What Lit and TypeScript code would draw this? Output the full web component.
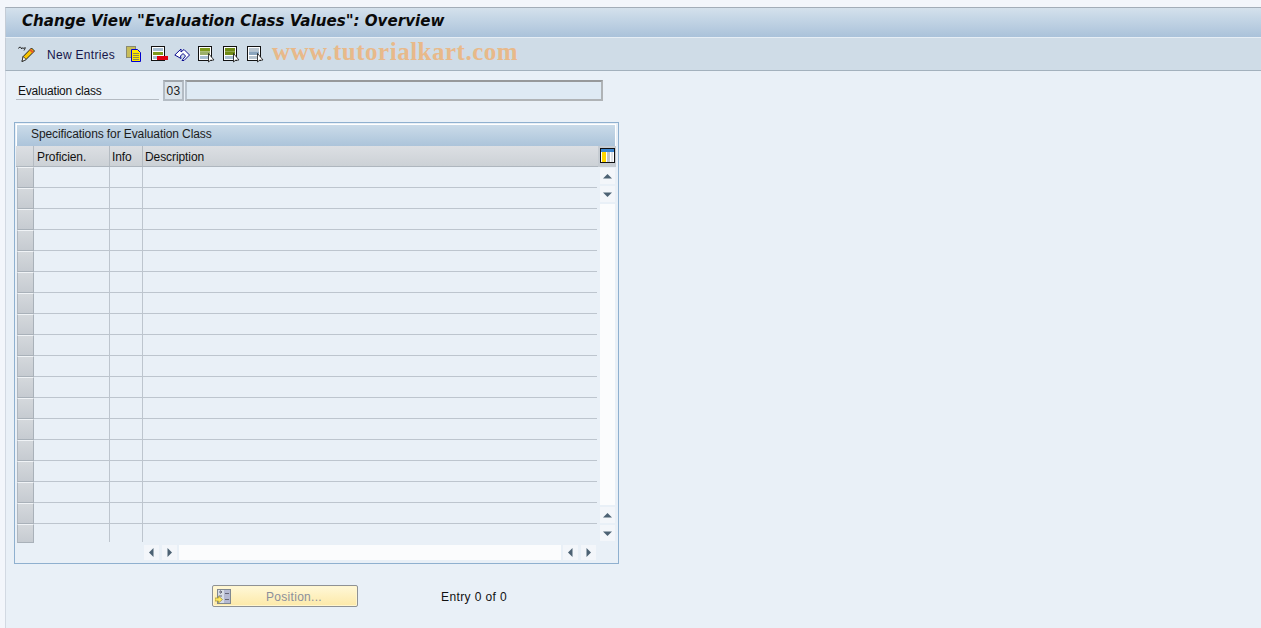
import { LitElement, html, css, svg } from "lit";
import { customElement } from "lit/decorators.js";

const ic = (w: number, h: number, body: unknown) =>
  html`<svg class="ic" width=${w} height=${h} viewBox="0 0 ${w} ${h}">${body}</svg>`;

const pencil = ic(18, 18, svg`
  <path d="M.5 3.500a1.500 1.500 0 1 1 3 .5M3.500 4a1.500 1.500 0 1 1 2.500 1.500M6 3h2" fill="none" stroke="#222" stroke-width="1"/>
  <path d="M4 16.500l1.200-5L13.500 3l3 3-8.500 8.500z" fill="#f9c400" stroke="#222" stroke-width="1"/>
  <path d="M12 4.500l3 3" stroke="#e4572a" stroke-width="2"/>
  <path d="M4 16.500l1.200-5 3 3z" fill="#fff" stroke="#222" stroke-width=".8"/>`);
const copy = ic(16, 16, svg`
  <rect x=".5" y=".5" width="9" height="11" fill="#c8bd5a" stroke="#8a8a70"/>
  <path d="M5.500 3.500h6l3 3v9h-9z" fill="#ffe600" stroke="#0000d0"/>
  <path d="M7 7.500h6M7 9.500h6M7 11.500h6M7 13.500h6" stroke="#8a8a50"/>`);
const del = ic(17, 16, svg`
  <rect x=".5" y=".5" width="13" height="14" fill="#fff" stroke="#111"/>
  <rect x="2" y="2" width="10" height="3" fill="#a9bfd2"/>
  <rect x="2" y="6" width="10" height="3" fill="#7f9a1c"/>
  <rect x="2" y="10" width="10" height="3" fill="#a9bfd2"/>
  <rect x="6" y="10" width="11" height="4" fill="#e00010"/>`);
const undo = ic(17, 15, svg`
  <path d="M.8 8L7 2v3l3-2.500 5.500 5.500-5.500 5.500H8l3.500-4.500L9 6.500 6.500 9 7 11.500z" fill="#fff" stroke="#0a0a90" stroke-width="1" stroke-linejoin="miter"/>`);
const sel = (a: string, b: string, c: string) => ic(17, 17, svg`
  <rect x=".5" y=".5" width="13" height="14" fill="#fff" stroke="#111"/>
  <rect x="2" y="2" width="10" height="3.500" fill=${a}/>
  <rect x="2" y="5.500" width="10" height="3.500" fill=${b}/>
  <rect x="2" y="10" width="10" height="3" fill=${c}/>
  <path d="M10.500 7.500v8.500l2-1.700 3.500-.3z" fill="#fff" stroke="#111" stroke-width=".8"/>`);
const columns = ic(15, 15, svg`
  <rect x=".5" y=".5" width="14" height="14" fill="#fff" stroke="#111"/>
  <rect x="1" y="1" width="13" height="3" fill="#3a86d0"/>
  <rect x="2" y="4" width="4" height="10" fill="#ffd800"/>
  <rect x="7" y="4" width="3" height="10" fill="#c0c5ca"/>
  <rect x="11" y="4" width="2" height="10" fill="#dfe3e7"/>`);
const posIcon = ic(16, 15, svg`
  <rect x="2.500" y=".5" width="13" height="14" fill="#d8dde6" stroke="#808890"/>
  <rect x="9" y="1" width="6" height="13" fill="#b5b9d2"/>
  <path d="M10 4.500h4M10 10.500h4" stroke="#667"/>
  <path d="M4 3h3M5 1.500L7 3 5 4.500M4 7h3" stroke="#667" fill="none"/>
  <path d="M0 9h3.500V7l4 3.500-4 3.500v-2H0z" fill="#ffe860" stroke="#a09030" stroke-width=".7"/>`);
const arrow = (d: "u" | "d" | "l" | "r") => {
  const p = { u: "M3 9.500L7.500 5 12 9.500z", d: "M3 5.500h9L7.500 10z", l: "M9.500 3v9L5 7.500z", r: "M5.500 3v9L10 7.500z" }[d];
  return html`<svg class="ic" width="15" height="15" viewBox="0 0 15 15"><path d=${p} fill="#4d6273"/></svg>`;
};

@customElement("app-root")
export class AppRoot extends LitElement {
  static styles = css`
    :host { display: block; width: 1261px; height: 628px; overflow: hidden; background: #f3f6fb;
      font-family: "Liberation Sans", Arial, sans-serif; font-size: 12px; color: #111; }
    .ic { display: block; flex: none; }
    .frame { margin-left: 5px; height: 628px; padding-top: 7px; box-sizing: border-box; display: flex; flex-direction: column; }
    .title { height: 31px; box-sizing: border-box; flex: none; border-top: 1px solid #a3adb8; border-left: 1px solid #c4ccd6;
      background: linear-gradient(#d4e1ec, #aac2da); display: flex; align-items: center; padding: 0 0 3px 16px;
      font: italic bold 15.100px "DejaVu Sans", sans-serif; color: #0a0a0a; border-bottom: 1px solid #e6eef5; }
    .toolbar { height: 33px; box-sizing: border-box; flex: none; background: #cfdce7; border-bottom: 1px solid #a3b1bd;
      border-left: 1px solid #c4ccd6; display: flex; align-items: center; padding-left: 12px; }
    .toolbar .new { width: 67px; margin: 0 12px 0 11px; padding-top: 2px; color: #16164a; white-space: nowrap; letter-spacing: .3px; }
    .tools { display: flex; align-items: center; }
    .tools .g6 { margin-left: 6px; }
    .tools .g7 { margin-left: 7px; }
    .tools .g8 { margin-left: 8px; }
    .tools .g9 { margin-left: 9px; }
    .mark { margin: 0 0 5px 8px; font: bold 25px "Liberation Serif", serif; color: #e8b98a; letter-spacing: .5px; white-space: nowrap; }
    .main { flex: 1; background: #e9f0f7; border-left: 1px solid #d2d9e2; padding: 9px 0 0 8px; display: flex; flex-direction: column; }
    .field { display: flex; align-items: stretch; height: 21px; }
    .field .lab { width: 143px; margin-left: 2px; margin-right: 4px; padding-left: 2px; box-sizing: border-box;
      border-bottom: 1px solid #b4bac1; line-height: 22px; height: 20px; letter-spacing: -.2px; }
    .field .key { width: 21px; box-sizing: border-box; background: #dbe4ec; border: 2px solid #b4bcc4; border-top-color: #a0a6ac;
      text-align: center; line-height: 18px; margin-right: 1px; color: #222; letter-spacing: .3px; }
    .field .val { width: 418px; box-sizing: border-box; background: #deeaf4; border: 2px solid #afb3b6; border-top-color: #96999b; border-left-color: #b8c2cc; }
    .box { margin-top: 21px; width: 605px; height: 442px; box-sizing: border-box; border: 1px solid #8fb0cf; padding: 1px 2px 0 1px; display: flex; flex-direction: column; }
    .box-title { height: 22px; flex: none; box-sizing: border-box; background: linear-gradient(#cadbe9, #acc4da); padding-left: 14px; line-height: 18px;
      border-left: 1px solid #fff; border-right: 1px solid #fff; border-top: 1px solid #fff; color: #1c1c1c; letter-spacing: -.1px; }
    .head-wrap { display: flex; flex: none; }
    .head { flex: 1; height: 21px; display: grid; grid-template-columns: 18px 76px 33px 1fr; background: linear-gradient(#dcdfe3, #ccd1d6);
      border-bottom: 1px solid #aeb6be; box-sizing: border-box; }
    .head div { border-right: 1px solid #b4bbc2; padding-left: 2px; line-height: 22px; overflow: hidden; letter-spacing: -.08px; }
    .head div:nth-child(2) { padding-left: 3px; }
    .head div:last-child { border-right: 0; }
    .cfg { width: 18px; height: 21px; box-sizing: border-box; background: #c6ccd2; padding: 2px 0 0 2px; flex: none; }
    .body { display: flex; flex: none; height: 378px; }
    .grid { width: 581px; flex: none; }
    .row { display: grid; grid-template-columns: 18px 76px 33px 1fr; height: 21px; box-sizing: border-box; }
    .row div { border-right: 1px solid #bdc5ce; border-bottom: 1px solid #bdc5ce; box-sizing: border-box; }
    .row div:last-child { border-right: 0; }
    .row .sel { margin-left: 1px; background: linear-gradient(#d4d8dc, #c6cbd1); border: 1px solid #a9b1b9; border-top-color: #f0f3f6; border-left-color: #b0b7bf; }
    .row:last-child { height: 19px; }
    .row:last-child div:not(.sel) { border-bottom: 0; height: 18px; }
    .vbar { width: 15px; margin-left: 3px; padding-top: 1px; display: flex; flex-direction: column; gap: 2px; height: 374px; box-sizing: border-box; }
    .btn { width: 15px; height: 16px; background: #f3f6fa; display: flex; align-items: center; justify-content: center; flex: none; }
    .track { flex: 1; background: #fbfcfd; width: 15px; }
    .hbar { display: flex; height: 15px; margin-left: 128px; width: 452px; }
    .hbar .btn { height: 15px; }
    .hbar .gap3 { margin-left: 3px; }
    .hbar .track { flex: 1; height: 15px; width: auto; margin: 0 2px; }
    .foot { display: flex; align-items: center; margin: 21px 0 0 198px; }
    .pbtn { width: 146px; height: 22px; box-sizing: border-box; border: 1px solid #8f9295; border-radius: 2px; background: linear-gradient(#fff8d8, #fde9a8);
      display: flex; align-items: center; padding-left: 2px; color: #8b8f9b; box-shadow: inset 0 0 0 1px #fff6cf; }
    .pbtn span { flex: 1; text-align: center; letter-spacing: .3px; padding-top: 2px; }
    .entry { margin-left: 83px; padding-top: 2px; color: #111; letter-spacing: .4px; }
  `;

  render() {
    const rows = Array.from({ length: 18 });
    return html`<div class="frame">
      <div class="title">Change View "Evaluation Class Values": Overview</div>
      <div class="toolbar">
        ${pencil}
        <span class="new">New Entries</span>
        <div class="tools">
          ${copy}
          <span class="g9">${del}</span>
          <span class="g6">${undo}</span>
          <span class="g7">${sel("#7f9a1c", "#9bb06a", "#a9bfd2")}</span>
          <span class="g8">${sel("#6f8a14", "#6f8a14", "#a9bfd2")}</span>
          <span class="g7">${sel("#b8c4ce", "#8aa4bc", "#b8c4ce")}</span>
        </div>
        <span class="mark">www.tutorialkart.com</span>
      </div>
      <div class="main">
        <div class="field">
          <div class="lab">Evaluation class</div>
          <div class="key">03</div>
          <div class="val"></div>
        </div>
        <div class="box">
          <div class="box-title">Specifications for Evaluation Class</div>
          <div class="head-wrap">
            <div class="head"><div></div><div>Proficien.</div><div>Info</div><div>Description</div></div>
            <div class="cfg">${columns}</div>
          </div>
          <div class="body">
            <div class="grid">
              ${rows.map(() => html`<div class="row"><div class="sel"></div><div></div><div></div><div></div></div>`)}
            </div>
            <div class="vbar">
              <div class="btn">${arrow("u")}</div>
              <div class="btn">${arrow("d")}</div>
              <div class="track"></div>
              <div class="btn">${arrow("u")}</div>
              <div class="btn">${arrow("d")}</div>
            </div>
          </div>
          <div class="hbar">
            <div class="btn">${arrow("l")}</div>
            <div class="btn gap3">${arrow("r")}</div>
            <div class="track"></div>
            <div class="btn">${arrow("l")}</div>
            <div class="btn gap3">${arrow("r")}</div>
          </div>
        </div>
        <div class="foot">
          <div class="pbtn">${posIcon}<span>Position...</span></div>
          <div class="entry">Entry 0 of 0</div>
        </div>
      </div>
    </div>`;
  }
}
